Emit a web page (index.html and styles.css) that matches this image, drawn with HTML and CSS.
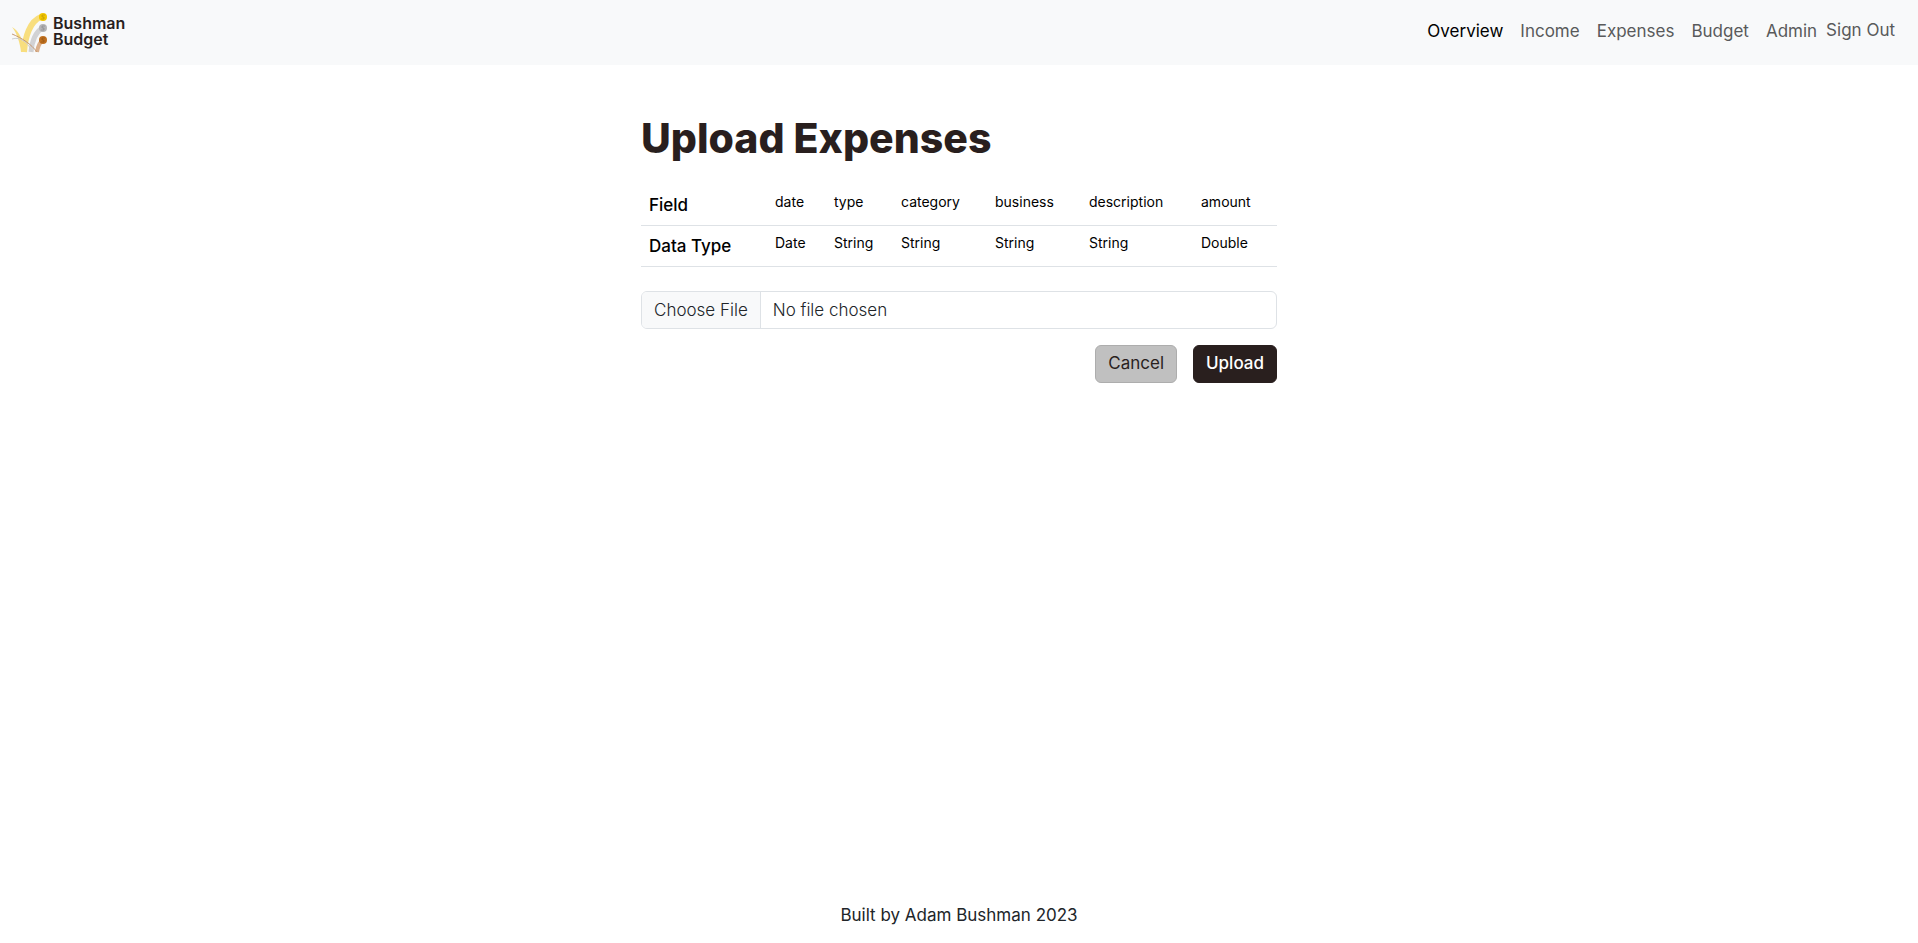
FILE: index.html
```html
<!DOCTYPE html>
<html lang="en">
<head>
    <title>Upload Expenses</title>
    <meta charset="utf-8"/>
    <meta name="viewport" content="width=device-width, initial-scale=1">
    <link rel="stylesheet" href="styles.css">
</head>
<body>
    <nav class="navbar">
        <a class="brand" href="#">
            <svg class="brand-mark" viewBox="0 0 36 40" aria-hidden="true">
                <path d="M12 39 C13 24 18 8 29 4" fill="none" stroke="#f8de7e" stroke-width="6"/>
                <path d="M0 14 C6 17 11 26 14 39 L9 39 C8 30 5 20 0 14 Z" fill="#f8de7e"/>
                <path d="M19 39 C20 28 24 19 30 15" fill="none" stroke="#d2d2d4" stroke-width="5"/>
                <path d="M25 39 C26 33 28 29 31 27" fill="none" stroke="#dbb08c" stroke-width="4"/>
                <path d="M0 26 C8 23 17 30 20 39" fill="none" stroke="#cfcfd0" stroke-width="1"/>
                <path d="M0 21 C10 25 19 31 25 39" fill="none" stroke="#c79a74" stroke-width="1"/>
                <circle cx="31" cy="4" r="4" fill="#f2c500"/>
                <circle cx="31" cy="15" r="4" fill="#b4b4b6"/>
                <circle cx="31" cy="27" r="4" fill="#c0701f"/>
                <path d="M33 2 H30 V4 H32 V6 H29 M33 13 H30 V15 H32 V17 H29 M33 25 H30 V27 H32 V29 H29" fill="none" stroke="#000" stroke-opacity=".15"/>
            </svg>
            <span class="brand-name">Bushman<br>Budget</span>
        </a>
        <ul class="nav-links">
            <li><a class="active" href="#">Overview</a></li>
            <li><a href="#">Income</a></li>
            <li><a href="#">Expenses</a></li>
            <li><a href="#">Budget</a></li>
            <li><a href="#">Admin</a></li>
        </ul>
        <button type="button" class="sign-out">Sign Out</button>
    </nav>

    <main class="content">
        <h1>Upload Expenses</h1>
        <table class="fields">
            <colgroup>
                <col class="col-label">
                <col class="col-date">
                <col class="col-type">
                <col class="col-category">
                <col class="col-business">
                <col class="col-description">
                <col>
            </colgroup>
            <tr>
                <th scope="row">Field</th>
                <td>date</td>
                <td>type</td>
                <td>category</td>
                <td>business</td>
                <td>description</td>
                <td>amount</td>
            </tr>
            <tr>
                <th scope="row">Data Type</th>
                <td>Date</td>
                <td>String</td>
                <td>String</td>
                <td>String</td>
                <td>String</td>
                <td>Double</td>
            </tr>
        </table>
        <form id="uploadForm">
            <input type="file" class="file-input" name="file" id="file" aria-label="Expenses file">
            <div class="actions">
                <button type="button" class="btn btn-cancel">Cancel</button>
                <button type="submit" class="btn btn-upload">Upload</button>
            </div>
        </form>
    </main>

    <footer class="footer">Built by Adam Bushman 2023</footer>
</body>
</html>
```

FILE: styles.css
```css
* {
    box-sizing: border-box;
}

body {
    margin: 0;
    min-height: 100vh;
    display: flex;
    flex-direction: column;
    background-color: #ffffff;
    color: #212529;
    font-family: Inter, "Liberation Sans", sans-serif;
    font-size: 17px;
    font-weight: 400;
    line-height: 24px;
}

.navbar {
    display: flex;
    align-items: center;
    height: 65px;
    padding: 0 23px 0 12px;
    background-color: #f8f9fa;
}

.brand {
    display: flex;
    align-items: center;
    gap: 5px;
    margin-right: auto;
    color: #291f1e;
    text-decoration: none;
}

.brand-mark {
    width: 36px;
    height: 40px;
}

.brand-name {
    padding-bottom: 3px;
    font-size: 16px;
    font-weight: 600;
    line-height: 16px;
}

.nav-links {
    display: flex;
    gap: 17px;
    margin: 0 9px 0 0;
    padding: 0 0 3px;
    list-style: none;
}

.nav-links a {
    color: #595a5b;
    text-decoration: none;
}

.nav-links a.active {
    color: #000000;
}

.sign-out {
    padding: 0 0 5px;
    border: none;
    background: none;
    color: #595a5b;
    font: inherit;
}

.content {
    width: 100%;
    max-width: 636px;
    margin: 0 auto;
    padding-top: 49px;
}

h1 {
    margin: 0 0 23px;
    color: #291f1e;
    font-size: 41px;
    font-weight: 800;
    line-height: 48px;
}

.fields {
    width: 100%;
    margin-bottom: 24px;
    border-collapse: collapse;
    table-layout: fixed;
    color: #000000;
}

.fields th,
.fields td {
    padding: 8px;
    border-bottom: 1px solid #dee2e6;
    text-align: left;
    vertical-align: top;
}

.fields th {
    font-weight: 500;
}

.fields td {
    font-size: 14px;
    line-height: 18px;
}

.col-label {
    width: 126px;
}

.col-date {
    width: 59px;
}

.col-type {
    width: 67px;
}

.col-category,
.col-business {
    width: 94px;
}

.col-description {
    width: 112px;
}

.file-input {
    display: block;
    width: 100%;
    height: 38px;
    border: 1px solid #dee2e6;
    border-radius: 6px;
    overflow: hidden;
    color: #212529;
    font: inherit;
    font-weight: 300;
    line-height: 36px;
}

.file-input::file-selector-button {
    height: 36px;
    margin: 0 12px 0 0;
    padding: 0 12px;
    border: 0;
    border-right: 1px solid #dee2e6;
    background-color: #f8f9fa;
    color: #212529;
    font: inherit;
}

.actions {
    display: flex;
    justify-content: flex-end;
    gap: 16px;
    margin-top: 16px;
}

.btn {
    height: 38px;
    padding: 0 12px 2px;
    border: 1px solid #291f1e;
    border-radius: 6px;
    font: inherit;
}

.btn-cancel {
    border-color: #adadad;
    background-color: #c0c0c0;
    color: #291f1e;
}

.btn-upload {
    background-color: #291f1e;
    color: #ffffff;
    font-weight: 500;
}

.footer {
    margin-top: auto;
    padding-bottom: 16px;
    text-align: center;
}
```
